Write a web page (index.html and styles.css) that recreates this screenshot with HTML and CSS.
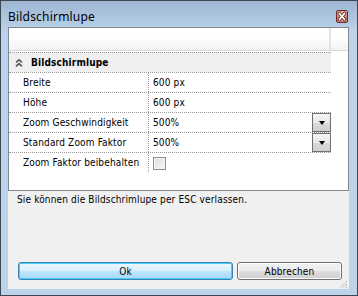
FILE: index.html
```html
<!DOCTYPE html>
<html>
<head>
<meta charset="utf-8">
<link rel="stylesheet" href="styles.css">
</head>
<body>
<div class="window">
  <div class="titlebar">
    <span class="title">Bildschirmlupe</span>
    <span class="close">
      <svg width="12" height="13" viewBox="0 0 12 13">
        <path d="M3.5 3.5 L8.5 9.5 M8.5 3.5 L3.5 9.5" stroke="#5a2a2a" stroke-width="3.2" stroke-linecap="square"/>
        <path d="M3.5 3.5 L8.5 9.5 M8.5 3.5 L3.5 9.5" stroke="#ffffff" stroke-width="1.6" stroke-linecap="square"/>
      </svg>
    </span>
  </div>
  <div class="client">
    <div class="grid">
      <div class="toolbar"><div class="tb-main"></div><div class="tb-side"></div></div>
      <div class="grid-body">
        <div class="rows">
          <div class="row category">
            <svg class="chev" width="8" height="8" viewBox="0 0 8 8">
              <path d="M1 3.5 L4 0.8 L7 3.5 M1 7.3 L4 4.6 L7 7.3" fill="none" stroke="#555" stroke-width="1.6"/>
            </svg>
            <span class="cat-name">Bildschirmlupe</span>
          </div>
          <div class="row">
            <div class="label">Breite</div>
            <div class="value">600 px</div>
          </div>
          <div class="row">
            <div class="label">Höhe</div>
            <div class="value">600 px</div>
          </div>
          <div class="row">
            <div class="label">Zoom Geschwindigkeit</div>
            <div class="value"><span class="val-text">500%</span><span class="drop"><span class="tri"></span></span></div>
          </div>
          <div class="row">
            <div class="label">Standard Zoom Faktor</div>
            <div class="value"><span class="val-text">500%</span><span class="drop"><span class="tri"></span></span></div>
          </div>
          <div class="row">
            <div class="label">Zoom Faktor beibehalten</div>
            <div class="value"><span class="check"></span></div>
          </div>
        </div>
      </div>
    </div>
    <div class="hint">Sie können die Bildschrimlupe per ESC verlassen.</div>
    <div class="buttons">
      <button class="btn btn-default">Ok</button>
      <button class="btn">Abbrechen</button>
    </div>
    <svg class="grip" width="9" height="9" viewBox="0 0 9 9">
      <path d="M8 1 L1 8 M8 4 L4 8 M8 7 L7 8" stroke="#9a9a9a" stroke-width="1" stroke-dasharray="1 1"/>
    </svg>
  </div>
</div>
</body>
</html>
```
FILE: styles.css
```css
* { box-sizing: border-box; }
html, body { margin: 0; padding: 0; }
body {
  width: 358px;
  height: 296px;
  overflow: hidden;
  font-family: "DejaVu Sans", sans-serif;
  font-stretch: semi-condensed;
  font-size: 10px;
  letter-spacing: 0.15px;
  color: #000;
}
.window {
  width: 358px;
  height: 296px;
  border: 1px solid #3d4653;
  background: linear-gradient(#9db6d2 0px, #b3cae3 22px, #bcd3eb 30px, #bdd3ea 100%);
  display: flex;
  flex-direction: column;
}
.titlebar {
  height: 26px;
  display: flex;
  align-items: flex-start;
  padding-left: 7px;
  padding-right: 9px;
}
.title {
  font-family: "Noto Sans", "DejaVu Sans", sans-serif;
  font-stretch: normal;
  letter-spacing: 0.2px;
  font-size: 12px;
  margin-top: 7px;
  color: #000;
}
.close {
  margin-left: auto;
  margin-top: 9px;
  width: 12px;
  height: 13px;
  border: 1px solid #6b2b2b;
  border-radius: 2px;
  background: linear-gradient(#eab0a6, #d9877a 50%, #c86a5c 51%, #dc8f80);
  display: flex;
  align-items: center;
  justify-content: center;
}
.close svg { display: block; margin: -1px; }
.client {
  flex: 1;
  margin: 0 8px 6px 7px;
  background: #f0f0f0;
  display: flex;
  flex-direction: column;
  position: relative;
}
.grid {
  height: 164px;
  border: 1px solid #828790;
  background: #fff;
  display: flex;
  flex-direction: column;
}
.toolbar {
  height: 23px;
  display: flex;
  border-bottom: 1px solid #d9d9d9;
  background: linear-gradient(#ffffff 0%, #ffffff 40%, #f2f3f5 100%);
}
.tb-main { width: 322px; border-right: 2px solid #e3e3e3; }
.tb-side { flex: 1; }
.grid-body {
  padding-top: 1px;
}
.rows { width: 322px; }
.row {
  height: 20px;
  border-top: 1px dotted #9a9a9a;
  display: flex;
  align-items: stretch;
}
.category {
  background: #f0f0f0;
  align-items: center;
  padding-left: 6px;
}
.chev { display: block; margin-right: 8px; }
.cat-name { font-weight: bold; }
.label {
  width: 140px;
  border-right: 1px dotted #9a9a9a;
  padding-left: 14px;
  display: flex;
  align-items: center;
  white-space: nowrap;
}
.value {
  flex: 1;
  display: flex;
  align-items: center;
  padding-left: 4px;
}
.val-text { flex: 1; }
.drop {
  width: 19px;
  height: 19px;
  border: 1px solid #707070;
  background: linear-gradient(#f4f4f4, #e8e8e8 50%, #dadada 51%, #d0d0d0);
  display: flex;
  align-items: center;
  justify-content: center;
  align-self: flex-start;
}
.tri {
  width: 0;
  height: 0;
  border-left: 3.5px solid transparent;
  border-right: 3.5px solid transparent;
  border-top: 4px solid #000;
}
.check {
  width: 13px;
  height: 13px;
  border: 1px solid #8e8f8f;
  background: linear-gradient(135deg, #dcdcdc, #f8f8f8);
  box-shadow: inset 0 0 0 1px #f4f4f4;
  margin-top: 2px;
}
.hint {
  padding: 3px 0 0 9px;
  height: 71px;
}
.buttons {
  display: flex;
  gap: 4px;
  padding-left: 10px;
}
.btn {
  font-family: "DejaVu Sans", sans-serif;
  font-stretch: semi-condensed;
  letter-spacing: 0.15px;
  font-size: 10px;
  height: 18px;
  padding: 0;
  border-radius: 3px;
  color: #000;
  border: 1px solid #707070;
  background: linear-gradient(#f2f2f2, #ebebeb 50%, #dddddd 51%, #cfcfcf);
  box-shadow: inset 0 0 0 1px #fcfcfc;
}
.btn-default {
  width: 215px;
  border-color: #3c7fb1;
  background: linear-gradient(#eaf6fd, #d9f0fc 50%, #bee6fd 51%, #a7d9f5);
  box-shadow: inset 0 0 0 1px #48d0f7;
}
.btn:not(.btn-default) { width: 105px; }
.grip {
  position: absolute;
  right: 1px;
  bottom: 0px;
}
```
